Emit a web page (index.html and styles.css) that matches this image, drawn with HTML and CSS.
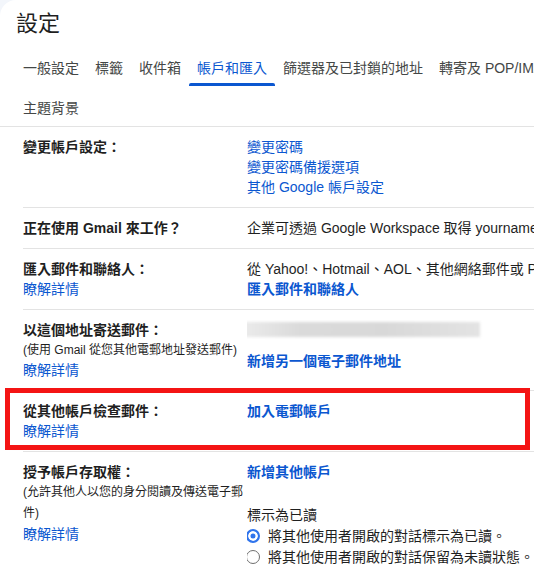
FILE: index.html
```html
<!DOCTYPE html>
<html lang="zh-Hant">
<head>
<meta charset="utf-8">
<title>設定</title>
<link rel="stylesheet" href="styles.css">
</head>
<body>
<div class="page">
  <header class="head">
    <h1 class="title">設定</h1>
    <nav class="tabs">
      <span class="tab">一般設定</span>
      <span class="tab">標籤</span>
      <span class="tab">收件箱</span>
      <span class="tab active">帳戶和匯入</span>
      <span class="tab">篩選器及已封鎖的地址</span>
      <span class="tab">轉寄及 POP/IMAP</span>
      <span class="tab">主題背景</span>
    </nav>
  </header>

  <div class="rows">
    <div class="row">
      <div class="label"><b>變更帳戶設定：</b></div>
      <div class="value">
        <a class="link">變更密碼</a>
        <a class="link">變更密碼備援選項</a>
        <a class="link">其他 Google 帳戶設定</a>
      </div>
    </div>

    <div class="row">
      <div class="label"><b>正在使用 Gmail 來工作？</b></div>
      <div class="value">
        <span class="text">企業可透過 Google Workspace 取得 yourname@example.com 電子郵件地址。</span>
      </div>
    </div>

    <div class="row">
      <div class="label">
        <b>匯入郵件和聯絡人：</b>
        <a class="link">瞭解詳情</a>
      </div>
      <div class="value">
        <span class="text">從 Yahoo!、Hotmail、AOL、其他網絡郵件或 POP3 電子郵件匯入。</span>
        <a class="link strong">匯入郵件和聯絡人</a>
      </div>
    </div>

    <div class="row">
      <div class="label">
        <b>以這個地址寄送郵件：</b>
        <span class="note">(使用 Gmail 從您其他電郵地址發送郵件)</span>
        <a class="link">瞭解詳情</a>
      </div>
      <div class="value">
        <div class="redacted-line"><span class="redacted"></span></div>
        <a class="link strong spaced">新增另一個電子郵件地址</a>
      </div>
    </div>

    <div class="row highlight">
      <div class="label">
        <b>從其他帳戶檢查郵件：</b>
        <a class="link">瞭解詳情</a>
      </div>
      <div class="value">
        <a class="link strong">加入電郵帳戶</a>
      </div>
    </div>

    <div class="row last">
      <div class="label">
        <b>授予帳戶存取權：</b>
        <span class="note wrap">(允許其他人以您的身分閱讀及傳送電子郵件)</span>
        <a class="link">瞭解詳情</a>
      </div>
      <div class="value">
        <a class="link strong">新增其他帳戶</a>
        <span class="text subhead">標示為已讀</span>
        <label class="radio-row"><span class="radio checked"></span>將其他使用者開啟的對話標示為已讀。</label>
        <label class="radio-row"><span class="radio"></span>將其他使用者開啟的對話保留為未讀狀態。</label>
      </div>
    </div>
  </div>
</div>
</body>
</html>
```

FILE: styles.css
```css
html, body {
  margin: 0;
  padding: 0;
  overflow: hidden;
  background: #f3f6fb;
}

body {
  font-family: "Liberation Sans", "Noto Sans CJK TC", sans-serif;
  font-size: 14px;
  line-height: 20px;
  color: #1f1f1f;
}

.page {
  background: #ffffff;
  border-top-left-radius: 16px;
  min-height: 580px;
  overflow: hidden;
}

.head {
  padding-top: 10px;
}

.title {
  margin: 0 0 8px 16px;
  font-size: 22px;
  line-height: 28px;
  font-weight: 400;
  color: #1f1f1f;
}

.tabs {
  display: flex;
  flex-wrap: wrap;
  width: 600px;
  padding-left: 15px;
  border-bottom: 1px solid #e3e3e3;
}

.tab {
  position: relative;
  box-sizing: border-box;
  height: 40px;
  padding: 12px 8px 0;
  color: #444746;
  white-space: nowrap;
}

.tab.active {
  color: #0b57d0;
}

.tab.active::after {
  content: "";
  position: absolute;
  left: 0;
  right: 0;
  bottom: 0;
  height: 3px;
  background: #0b57d0;
  border-radius: 2px 2px 0 0;
}

.rows {
  padding-left: 23px;
}

.row {
  display: grid;
  grid-template-columns: 224px 1fr;
  padding: 10px 0;
  border-bottom: 1px solid #e3e3e3;
}

.row.last {
  border-bottom: none;
}

.row.highlight {
  position: relative;
}

.row.highlight::after {
  content: "";
  position: absolute;
  top: -3px;
  bottom: 1px;
  left: -18px;
  right: 4px;
  border: 5px solid #f41414;
}

.label,
.value {
  display: flex;
  flex-direction: column;
  align-items: flex-start;
}

.value {
  overflow: hidden;
  white-space: nowrap;
}

.label b {
  font-weight: 700;
  color: #1f1f1f;
}

.note {
  font-size: 12px;
  line-height: 20px;
  color: #1f1f1f;
}

.row.last .label .note,
.row.last .label .link {
  line-height: 21px;
}

.link {
  color: #0b57d0;
  text-decoration: none;
  cursor: pointer;
}

.link.strong {
  font-weight: 700;
}

.link.spaced {
  margin-top: 11px;
}

.redacted-line {
  height: 20px;
  width: 100%;
}

.redacted {
  display: block;
  width: 240px;
  height: 15px;
  margin: 2px 0 0 -7px;
  background: linear-gradient(90deg, #ececec 0%, #dadada 25%, #d8d8d8 60%, #e3e3e3 100%);
  filter: blur(1.5px);
}

.subhead {
  margin-top: 23px;
}

.radio-row {
  display: flex;
  align-items: center;
  gap: 8px;
  height: 21px;
  color: #1f1f1f;
}

.radio {
  box-sizing: border-box;
  width: 14px;
  height: 14px;
  margin-left: -1px;
  border-radius: 50%;
  border: 1px solid #6f6f6f;
  background: #ffffff;
}

.radio.checked {
  border: 2px solid #2f74ec;
  background: #2f74ec;
  box-shadow: inset 0 0 0 2.5px #ffffff;
}
```
